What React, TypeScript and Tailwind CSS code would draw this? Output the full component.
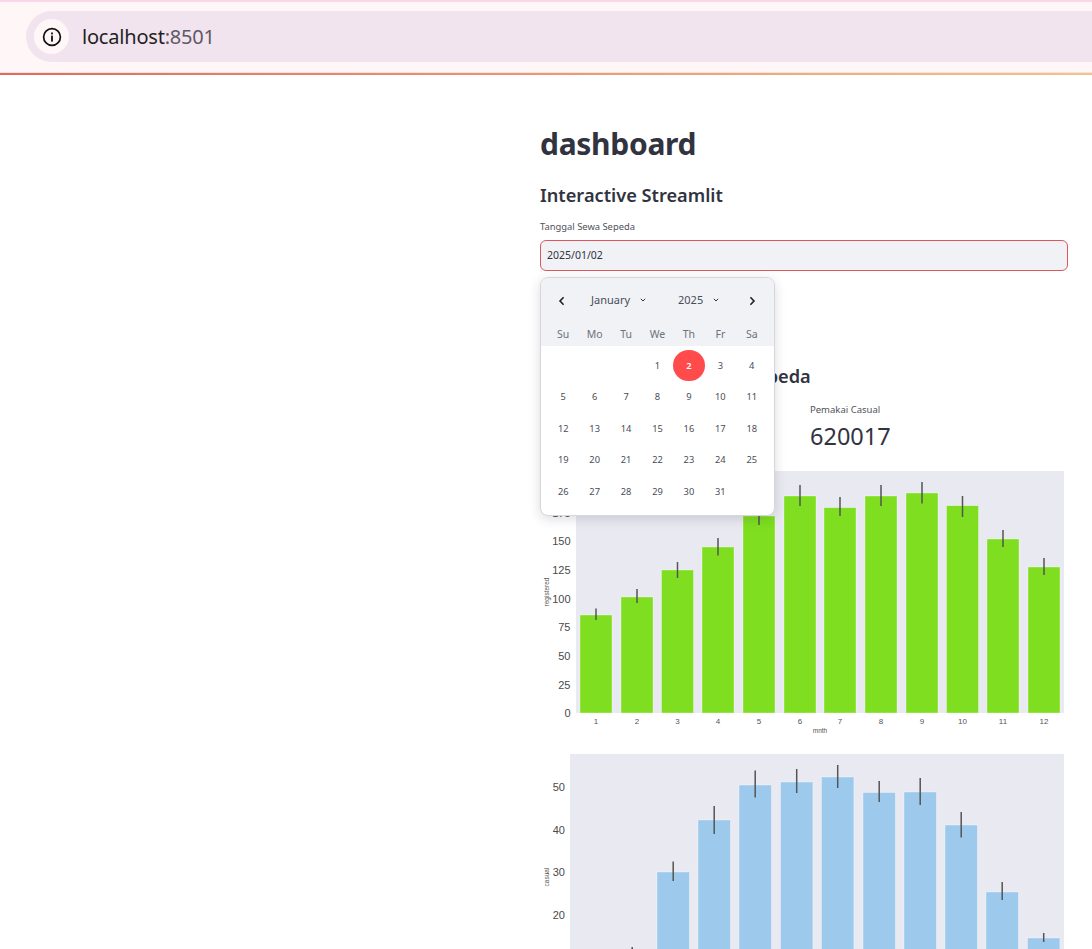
import React from "react";

const ui = { fontFamily: '"Noto Sans", sans-serif' };
const arial = '"Liberation Sans", Arial, sans-serif';

type Bar = { x: number; top: number; e0: number; e1: number };

const greenBars: Bar[] = [
  { x: 580, top: 615, e0: 608.5, e1: 620 },
  { x: 621, top: 597, e0: 589, e1: 603 },
  { x: 661.5, top: 570, e0: 562, e1: 578 },
  { x: 702, top: 547, e0: 538, e1: 555.5 },
  { x: 743, top: 516, e0: 505, e1: 525 },
  { x: 784, top: 496, e0: 485, e1: 506 },
  { x: 824, top: 507.7, e0: 497, e1: 516 },
  { x: 865, top: 496, e0: 485, e1: 506 },
  { x: 906, top: 493, e0: 482, e1: 503.5 },
  { x: 946.5, top: 505.7, e0: 496, e1: 517 },
  { x: 987, top: 539, e0: 530, e1: 547 },
  { x: 1028, top: 567, e0: 558, e1: 575 },
];

const blueBars: Bar[] = [
  { x: 575, top: 975, e0: 970, e1: 985 },
  { x: 616, top: 958, e0: 947, e1: 970 },
  { x: 657, top: 872, e0: 861.5, e1: 881 },
  { x: 698, top: 820, e0: 806, e1: 834 },
  { x: 739, top: 785, e0: 770.5, e1: 797.5 },
  { x: 780.5, top: 782, e0: 769, e1: 793 },
  { x: 821.5, top: 777, e0: 765, e1: 788 },
  { x: 863, top: 792.5, e0: 781, e1: 802 },
  { x: 904, top: 792, e0: 778, e1: 805 },
  { x: 945, top: 825, e0: 812, e1: 837.5 },
  { x: 986, top: 892, e0: 882, e1: 900 },
  { x: 1027.5, top: 938, e0: 933, e1: 942 },
];

function Bars({ bars, fill, bottom, w }: { bars: Bar[]; fill: string; bottom: number; w: number }) {
  return (
    <>
      {bars.map((b) => (
        <g key={b.x}>
          <rect x={b.x} y={b.top} width={w} height={bottom - b.top} fill={fill} stroke="#ffffff" strokeOpacity="0.55" strokeWidth="0.6" />
          <line x1={b.x + w / 2} x2={b.x + w / 2} y1={b.e0} y2={b.e1} stroke="#555555" strokeWidth="1.5" />
        </g>
      ))}
    </>
  );
}

function RegisteredChart() {
  const ticks: [string, number][] = [
    ["0", 713], ["25", 684.5], ["50", 656], ["75", 627], ["100", 598.5], ["125", 570], ["150", 541], ["175", 513],
  ];
  return (
    <svg viewBox="540 471 528 264" className="block w-[528px] h-[264px]" fontFamily={arial}>
      <rect x="576" y="471" width="488" height="242" fill="#e9e9f1" />
      <Bars bars={greenBars} fill="#7ede1f" bottom={713} w={32} />
      {ticks.map(([t, y]) => (
        <text key={t} x="570.5" y={y + 4} textAnchor="end" fontSize="11" fill="#4a4a4a">{t}</text>
      ))}
      {greenBars.map((b, i) => (
        <text key={b.x} x={b.x + 16} y="724" textAnchor="middle" fontSize="8" fill="#555">{i + 1}</text>
      ))}
      <text x="820" y="733" textAnchor="middle" fontSize="6.5" fill="#555">mnth</text>
      <text transform="translate(549 592) rotate(-90)" textAnchor="middle" fontSize="6.5" fill="#555">registered</text>
    </svg>
  );
}

function CasualChart() {
  const ticks: [string, number][] = [["50", 787], ["40", 830], ["30", 872], ["20", 915]];
  return (
    <svg viewBox="540 754 528 195" className="block w-[528px] h-[195px]" fontFamily={arial}>
      <rect x="570" y="754" width="494" height="195" fill="#e9e9f1" />
      <Bars bars={blueBars} fill="#9dc9ec" bottom={960} w={32.4} />
      {ticks.map(([t, y]) => (
        <text key={t} x="565" y={y + 4} textAnchor="end" fontSize="11" fill="#4a4a4a">{t}</text>
      ))}
      <text transform="translate(549 877) rotate(-90)" textAnchor="middle" fontSize="6.5" fill="#555">casual</text>
    </svg>
  );
}

function Chevron({ dir }: { dir: "left" | "right" | "down" }) {
  if (dir === "down") {
    return (
      <svg width="6" height="4" viewBox="0 0 6 4" className="ml-[10px] mb-[2px]">
        <path d="M0.8 0.8 L3 3 L5.2 0.8" fill="none" stroke="#31333f" strokeWidth="1" />
      </svg>
    );
  }
  return (
    <svg width="8" height="10" viewBox="0 0 8 10">
      <path d={dir === "left" ? "M5.6 1.2 L2 5 L5.6 8.8" : "M2.4 1.2 L6 5 L2.4 8.8"} fill="none" stroke="#1f2029" strokeWidth="1.6" />
    </svg>
  );
}

const days: (number | null)[] = [null, null, null, ...Array.from({ length: 31 }, (_, i) => i + 1)];

function Calendar() {
  return (
    <div className="absolute left-0 top-[37px] z-10 w-[235px] h-[239px] rounded-[8px] border border-[#d6d7dd] bg-white shadow-[0_3px_12px_rgba(40,40,60,0.16)] overflow-hidden">
      <div className="h-[68px] bg-[#f0f2f6] flex flex-col">
        <div className="h-[45px] shrink-0 flex items-center text-[11px] text-[#4a4c58]">
          <div className="w-[41px] flex justify-center"><Chevron dir="left" /></div>
          <div className="flex items-center ml-[9px] w-[87px]">January<Chevron dir="down" /></div>
          <div className="flex items-center w-[63px]">2025<Chevron dir="down" /></div>
          <div className="flex-1 flex justify-center pr-[12px]"><Chevron dir="right" /></div>
        </div>
        <div className="w-[220px] mx-auto grid grid-cols-7 text-[10.5px] text-[#6f717c] text-center leading-[22px]">
          {["Su", "Mo", "Tu", "We", "Th", "Fr", "Sa"].map((d) => <div key={d}>{d}</div>)}
        </div>
      </div>
      <div className="w-[220px] mx-auto grid grid-cols-7 auto-rows-[31.5px] pt-[4px] text-[9.3px] text-[#4a4c58]">
        {days.map((d, i) => (
          <div key={i} className="flex items-center justify-center">
            {d === 2 ? (
              <div className="w-[32px] h-[31px] rounded-full bg-[#ff4b4b] text-white font-semibold flex items-center justify-center">2</div>
            ) : d}
          </div>
        ))}
      </div>
    </div>
  );
}

export default function App() {
  return (
    <div className="w-[1092px] h-[949px] overflow-hidden bg-white text-[#31333f]" style={ui}>
      <header className="h-[75px] flex flex-col bg-[#fff6f8]">
        <div className="h-[2px] bg-[#fad6ea]" />
        <div className="h-[9px]" />
        <div className="ml-[26px] h-[51px] rounded-l-full bg-[#f2e4ee] flex items-center pl-[8px]">
          <div className="w-[35px] h-[35px] rounded-full bg-[#fff6f8] flex items-center justify-center">
            <svg width="20" height="20" viewBox="0 0 20 20">
              <circle cx="10" cy="10" r="8.4" fill="none" stroke="#111" strokeWidth="1.7" />
              <rect x="9.1" y="8.6" width="1.8" height="6" fill="#111" />
              <rect x="9.1" y="5.5" width="1.8" height="1.9" fill="#111" />
            </svg>
          </div>
          <div className="ml-[13px] text-[20px] leading-none text-[#1f1f1f] tracking-[-0.2px]">
            localhost<span className="text-[#5d5966]">:8501</span>
          </div>
        </div>
        <div className="flex-1" />
        <div className="h-[1px] bg-[#f6e2da]" />
        <div className="h-[2px] bg-gradient-to-r from-[#dc6c60] to-[#efc58a]" />
      </header>

      <main className="flex justify-end pr-[24px]">
        <div className="w-[528px] flex flex-col">
          <h1 className="mt-[47px] h-[44px] text-[30px] leading-[44px] font-bold tracking-[-0.3px]">dashboard</h1>
          <h2 className="mt-[15px] h-[28px] text-[18.2px] leading-[28px] font-semibold">Interactive Streamlit</h2>
          <div className="mt-[10px] h-[16px] text-[9.4px] leading-[16px] text-[#50525c]">Tanggal Sewa Sepeda</div>
          <div className="relative mt-[5px]">
            <div className="h-[31px] rounded-[6px] border border-[#e2555f] bg-[#f0f2f6] pl-[6px] flex items-center text-[10.5px]">2025/01/02</div>
            <Calendar />
          </div>
          <h2 className="mt-[90px] h-[30px] pl-[206px] text-[18.2px] leading-[30px] font-semibold whitespace-nowrap">Sepeda</h2>
          <div className="mt-[12px] grid grid-cols-2 h-[64px]">
            <div />
            <div className="ml-[6px]">
              <div className="text-[9.5px] leading-[14px] text-[#50525c]">Pemakai Casual</div>
              <div className="mt-[2px] text-[23.5px] leading-[34px]">620017</div>
            </div>
          </div>
          <div className="mt-[4px]"><RegisteredChart /></div>
          <div className="mt-[19px]"><CasualChart /></div>
        </div>
      </main>
    </div>
  );
}
